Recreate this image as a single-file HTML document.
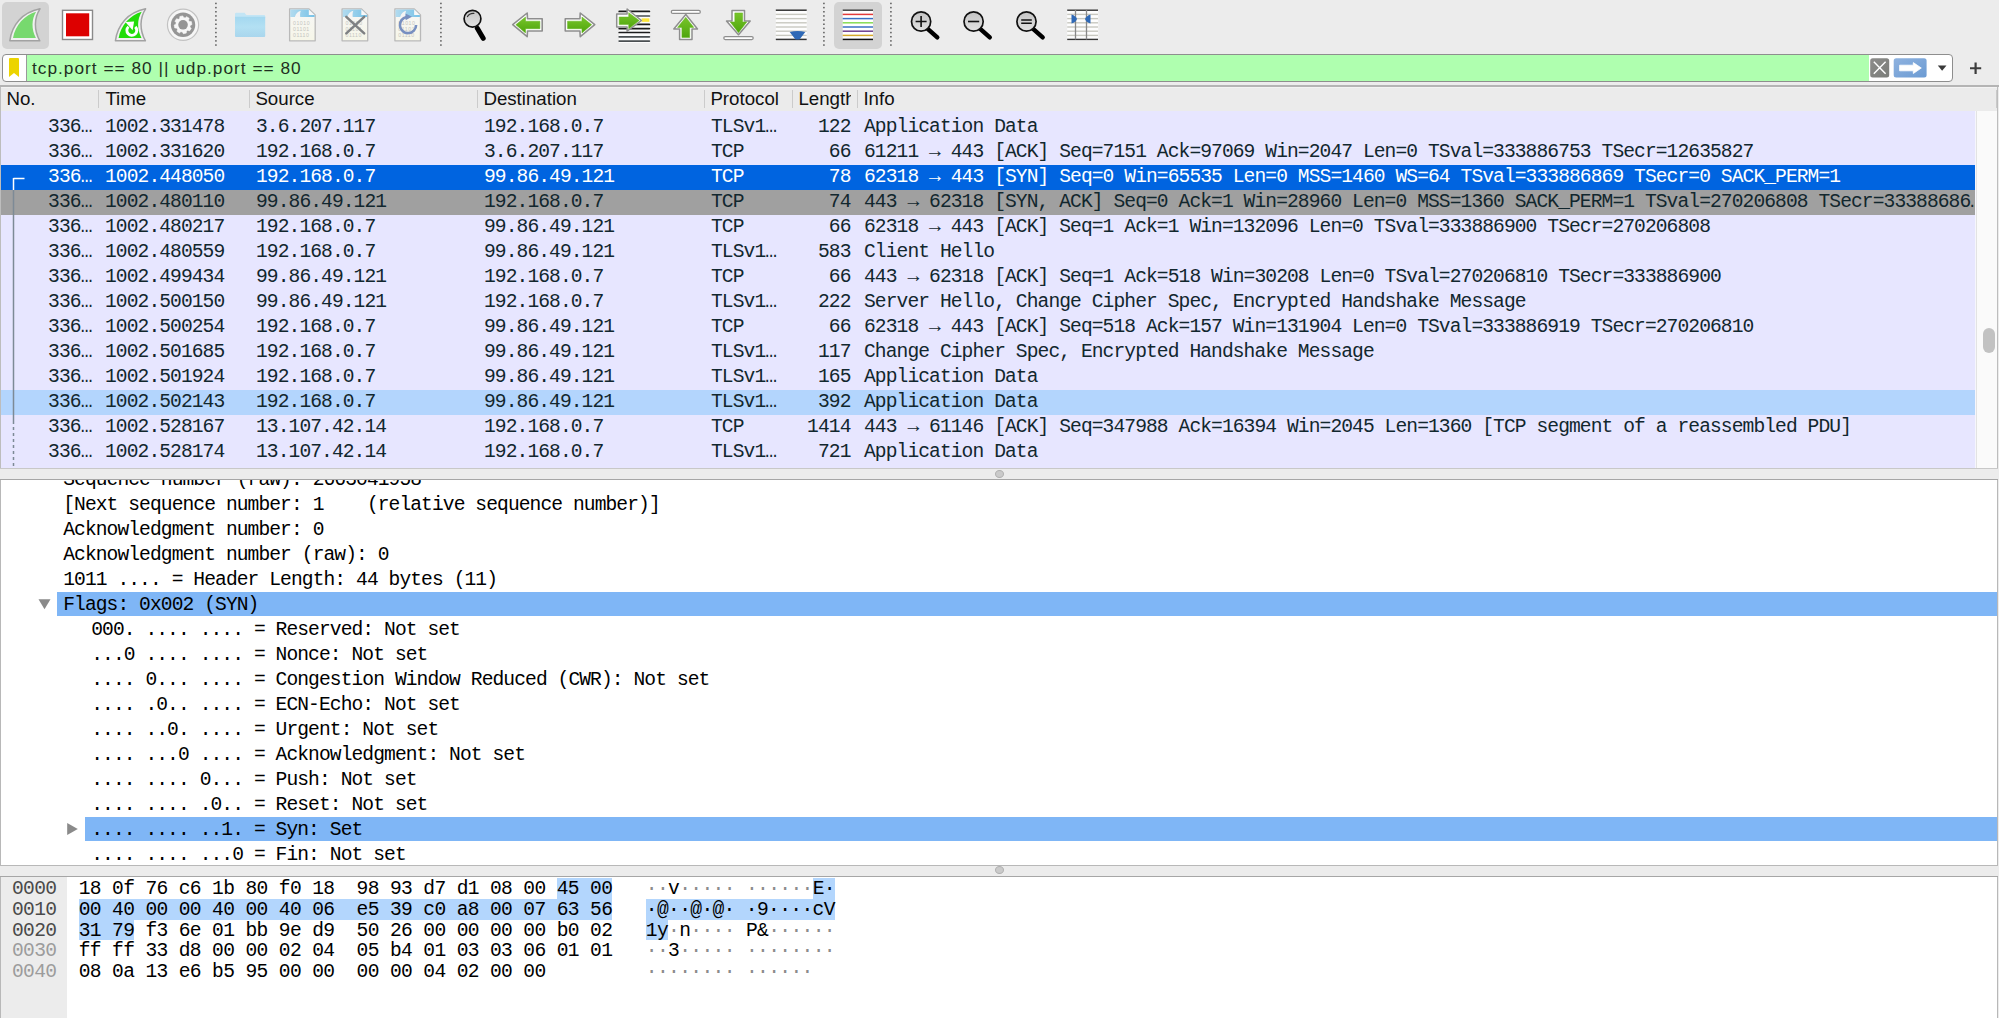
<!DOCTYPE html>
<html><head><meta charset="utf-8"><title>Wireshark</title><style>
*{margin:0;padding:0;box-sizing:border-box}
html,body{width:1999px;height:1018px;overflow:hidden;background:#ececec;position:relative}
.a{position:absolute}
.m{font-family:"Liberation Mono", monospace;font-size:19.6px;letter-spacing:-0.912px;white-space:pre;line-height:25px}
.s{font-family:"Liberation Sans", sans-serif;white-space:pre}
svg{position:absolute;overflow:visible}
</style></head>
<body>
<div class="a" style="left:2px;top:2px;width:47px;height:47px;background:#d3d3d3;border-radius:5px"></div>
<div class="a" style="left:834px;top:2px;width:48px;height:47px;background:#d3d3d3;border-radius:5px"></div>
<svg style="left:0;top:0" width="218" height="50"><rect x="215" y="2.70" width="1.8" height="1.5" fill="#707070"/><rect x="215" y="6.86" width="1.8" height="1.5" fill="#707070"/><rect x="215" y="11.02" width="1.8" height="1.5" fill="#707070"/><rect x="215" y="15.18" width="1.8" height="1.5" fill="#707070"/><rect x="215" y="19.34" width="1.8" height="1.5" fill="#707070"/><rect x="215" y="23.50" width="1.8" height="1.5" fill="#707070"/><rect x="215" y="27.66" width="1.8" height="1.5" fill="#707070"/><rect x="215" y="31.82" width="1.8" height="1.5" fill="#707070"/><rect x="215" y="35.98" width="1.8" height="1.5" fill="#707070"/><rect x="215" y="40.14" width="1.8" height="1.5" fill="#707070"/><rect x="215" y="44.30" width="1.8" height="1.5" fill="#707070"/></svg>
<svg style="left:0;top:0" width="443" height="50"><rect x="440" y="2.70" width="1.8" height="1.5" fill="#707070"/><rect x="440" y="6.86" width="1.8" height="1.5" fill="#707070"/><rect x="440" y="11.02" width="1.8" height="1.5" fill="#707070"/><rect x="440" y="15.18" width="1.8" height="1.5" fill="#707070"/><rect x="440" y="19.34" width="1.8" height="1.5" fill="#707070"/><rect x="440" y="23.50" width="1.8" height="1.5" fill="#707070"/><rect x="440" y="27.66" width="1.8" height="1.5" fill="#707070"/><rect x="440" y="31.82" width="1.8" height="1.5" fill="#707070"/><rect x="440" y="35.98" width="1.8" height="1.5" fill="#707070"/><rect x="440" y="40.14" width="1.8" height="1.5" fill="#707070"/><rect x="440" y="44.30" width="1.8" height="1.5" fill="#707070"/></svg>
<svg style="left:0;top:0" width="826" height="50"><rect x="823" y="2.70" width="1.8" height="1.5" fill="#707070"/><rect x="823" y="6.86" width="1.8" height="1.5" fill="#707070"/><rect x="823" y="11.02" width="1.8" height="1.5" fill="#707070"/><rect x="823" y="15.18" width="1.8" height="1.5" fill="#707070"/><rect x="823" y="19.34" width="1.8" height="1.5" fill="#707070"/><rect x="823" y="23.50" width="1.8" height="1.5" fill="#707070"/><rect x="823" y="27.66" width="1.8" height="1.5" fill="#707070"/><rect x="823" y="31.82" width="1.8" height="1.5" fill="#707070"/><rect x="823" y="35.98" width="1.8" height="1.5" fill="#707070"/><rect x="823" y="40.14" width="1.8" height="1.5" fill="#707070"/><rect x="823" y="44.30" width="1.8" height="1.5" fill="#707070"/></svg>
<svg style="left:0;top:0" width="893" height="50"><rect x="890" y="2.70" width="1.8" height="1.5" fill="#707070"/><rect x="890" y="6.86" width="1.8" height="1.5" fill="#707070"/><rect x="890" y="11.02" width="1.8" height="1.5" fill="#707070"/><rect x="890" y="15.18" width="1.8" height="1.5" fill="#707070"/><rect x="890" y="19.34" width="1.8" height="1.5" fill="#707070"/><rect x="890" y="23.50" width="1.8" height="1.5" fill="#707070"/><rect x="890" y="27.66" width="1.8" height="1.5" fill="#707070"/><rect x="890" y="31.82" width="1.8" height="1.5" fill="#707070"/><rect x="890" y="35.98" width="1.8" height="1.5" fill="#707070"/><rect x="890" y="40.14" width="1.8" height="1.5" fill="#707070"/><rect x="890" y="44.30" width="1.8" height="1.5" fill="#707070"/></svg>
<svg style="left:0;top:0" width="60" height="52"><g transform="translate(0 0)">
<path d="M9.8 40.8 C12 25 22 12.5 40 8.8 C34 18 33.8 30 39.8 40.8 Z" fill="#f1f1f1" stroke="#a2a2a2" stroke-width="1.5" stroke-linejoin="round"/>
<path d="M13 38 C15.2 25.5 24.5 15 36.1 11.8 C31.5 19.5 31.3 29 35.9 38 Z" fill="#77d96e"/></g>
</svg>
<svg style="left:0;top:0" width="100" height="52">
<rect x="62.5" y="10.3" width="30" height="29.2" fill="#fff" stroke="#8a8a8a" stroke-width="1.4"/>
<rect x="66" y="13.3" width="23.2" height="23" fill="#dd0000"/>
</svg>
<svg style="left:0;top:0" width="165.6" height="52"><g transform="translate(105.6 0)">
<path d="M9.8 40.8 C12 25 22 12.5 40 8.8 C34 18 33.8 30 39.8 40.8 Z" fill="#f1f1f1" stroke="#a2a2a2" stroke-width="1.5" stroke-linejoin="round"/>
<path d="M13 38 C15.2 25.5 24.5 15 36.1 11.8 C31.5 19.5 31.3 29 35.9 38 Z" fill="#22dd0a"/><path d="M29.70 26.90 A4.95 4.95 0 1 1 22.89 26.72" fill="none" stroke="#fff" stroke-width="2.9"/><path d="M19.8 22 L28.5 21.4 L27 30.2 Z" fill="#fff"/></g>
</svg>
<svg style="left:0;top:0" width="220" height="52">
<circle cx="183.05" cy="24.8" r="15.6" fill="#f6f6f6" stroke="#c2c2c2" stroke-width="1.2"/>
<circle cx="183.05" cy="24.8" r="12.2" fill="#959595"/>
<polygon points="189.44,21.48 191.35,21.58 191.95,24.53 190.23,25.38 189.92,26.96 191.19,28.39 189.53,30.90 187.72,30.28 186.37,31.19 186.27,33.10 183.32,33.70 182.47,31.98 180.89,31.67 179.46,32.94 176.95,31.28 177.57,29.47 176.66,28.12 174.75,28.02 174.15,25.07 175.87,24.22 176.18,22.64 174.91,21.21 176.57,18.70 178.38,19.32 179.73,18.41 179.83,16.50 182.78,15.90 183.63,17.62 185.21,17.93 186.64,16.66 189.15,18.32 188.53,20.13" fill="#f7f7f7" stroke="#f7f7f7" stroke-width="0.6" stroke-linejoin="round"/>
<circle cx="183.05" cy="24.8" r="4.8" fill="#959595"/>
</svg>
<svg style="left:0;top:0" width="280" height="52">
<defs><linearGradient id="fg" x1="0" y1="0" x2="0" y2="1"><stop offset="0" stop-color="#a4d8f0"/><stop offset="0.5" stop-color="#b3e0f3"/><stop offset="1" stop-color="#a9d6ed"/></linearGradient></defs>
<path d="M235 14 Q235 12.8 236.2 12.8 L244.5 12.8 L246.3 15 L264 15 Q265.2 15 265.2 16.2 L265.2 18 L235 18 Z" fill="#c3e5f5"/>
<path d="M235 16.8 L265.2 16.8 L265.2 36 Q265.2 37 264.2 37 L236 37 Q235 37 235 36 Z" fill="url(#fg)"/>
</svg>
<svg style="left:0;top:0" width="329" height="52">
<defs><linearGradient id="dg289" x1="0" y1="0" x2="1" y2="0"><stop offset="0" stop-color="#b2dbef"/><stop offset="1" stop-color="#78c2e7"/></linearGradient>
<linearGradient id="dp289" x1="0" y1="0" x2="0" y2="1"><stop offset="0" stop-color="#f7f7f7"/><stop offset="1" stop-color="#f6f6e8"/></linearGradient></defs>
<path d="M289.60 8.9 L309.00 8.9 L315.20 15 L315.20 40.8 L289.60 40.8 Z" fill="url(#dp289)" stroke="#b9b9b9" stroke-width="1.3" stroke-linejoin="round"/>
<path d="M290.20 9.5 L308.80 9.5 L314.60 15.2 L314.60 17 L290.20 17 Z" fill="url(#dg289)"/>
<path d="M294.80 17 C296.00 13.5 298.00 11.5 300.80 10.8 C300.00 13 300.00 15 300.20 17 Z" fill="#f4f4f4"/>
<path d="M308.80 9.5 L308.80 15 L314.60 15 Z" fill="#f8f8f8"/>
<text x="293.00" y="24.9" font-family="Liberation Sans" font-size="5.2" fill="#c4c4c0" letter-spacing="0.55">01010</text>
<text x="293.00" y="31.1" font-family="Liberation Sans" font-size="5.2" fill="#c4c4c0" letter-spacing="0.55">01101</text>
<text x="293.00" y="37.3" font-family="Liberation Sans" font-size="5.2" fill="#c4c4c0" letter-spacing="0.55">01110</text>

</svg>
<svg style="left:0;top:0" width="381.5" height="52">
<defs><linearGradient id="dg341" x1="0" y1="0" x2="1" y2="0"><stop offset="0" stop-color="#b2dbef"/><stop offset="1" stop-color="#78c2e7"/></linearGradient>
<linearGradient id="dp341" x1="0" y1="0" x2="0" y2="1"><stop offset="0" stop-color="#f7f7f7"/><stop offset="1" stop-color="#f6f6e8"/></linearGradient></defs>
<path d="M342.10 8.9 L361.50 8.9 L367.70 15 L367.70 40.8 L342.10 40.8 Z" fill="url(#dp341)" stroke="#b9b9b9" stroke-width="1.3" stroke-linejoin="round"/>
<path d="M342.70 9.5 L361.30 9.5 L367.10 15.2 L367.10 17 L342.70 17 Z" fill="url(#dg341)"/>
<path d="M347.30 17 C348.50 13.5 350.50 11.5 353.30 10.8 C352.50 13 352.50 15 352.70 17 Z" fill="#f4f4f4"/>
<path d="M361.30 9.5 L361.30 15 L367.10 15 Z" fill="#f8f8f8"/>
<text x="345.50" y="24.9" font-family="Liberation Sans" font-size="5.2" fill="#c4c4c0" letter-spacing="0.55">01010</text>
<text x="345.50" y="31.1" font-family="Liberation Sans" font-size="5.2" fill="#c4c4c0" letter-spacing="0.55">01101</text>
<text x="345.50" y="37.3" font-family="Liberation Sans" font-size="5.2" fill="#c4c4c0" letter-spacing="0.55">01110</text>
<path d="M346.3 16.8 L364.2 33.4 M364.2 16.8 L346.3 33.4" stroke="#7f8183" stroke-width="2.5" stroke-linecap="round"/>
</svg>
<svg style="left:0;top:0" width="434.3" height="52">
<defs><linearGradient id="dg394" x1="0" y1="0" x2="1" y2="0"><stop offset="0" stop-color="#b2dbef"/><stop offset="1" stop-color="#78c2e7"/></linearGradient>
<linearGradient id="dp394" x1="0" y1="0" x2="0" y2="1"><stop offset="0" stop-color="#f7f7f7"/><stop offset="1" stop-color="#f6f6e8"/></linearGradient></defs>
<path d="M394.90 8.9 L414.30 8.9 L420.50 15 L420.50 40.8 L394.90 40.8 Z" fill="url(#dp394)" stroke="#b9b9b9" stroke-width="1.3" stroke-linejoin="round"/>
<path d="M395.50 9.5 L414.10 9.5 L419.90 15.2 L419.90 17 L395.50 17 Z" fill="url(#dg394)"/>
<path d="M400.10 17 C401.30 13.5 403.30 11.5 406.10 10.8 C405.30 13 405.30 15 405.50 17 Z" fill="#f4f4f4"/>
<path d="M414.10 9.5 L414.10 15 L419.90 15 Z" fill="#f8f8f8"/>
<text x="398.30" y="24.9" font-family="Liberation Sans" font-size="5.2" fill="#c4c4c0" letter-spacing="0.55">01010</text>
<text x="398.30" y="31.1" font-family="Liberation Sans" font-size="5.2" fill="#c4c4c0" letter-spacing="0.55">01101</text>
<text x="398.30" y="37.3" font-family="Liberation Sans" font-size="5.2" fill="#c4c4c0" letter-spacing="0.55">01110</text>
<path d="M416.1 25 A8.1 8.1 0 1 1 406.6 17.0" fill="none" stroke="#7890c0" stroke-width="2.6"/><path d="M405.6 13.6 L412 16.7 L405.6 20.2 Z" fill="#7890c0"/>
</svg>
<svg style="left:0;top:0" width="500" height="52"><defs><linearGradient id="mg472" x1="0" y1="0" x2="0" y2="1"><stop offset="0" stop-color="#c4c4c4"/><stop offset="1" stop-color="#e2e2e2"/></linearGradient></defs>
<path d="M477.3 28.3 L483.2 38.3" stroke="#000" stroke-width="5.0" stroke-linecap="round"/>
<circle cx="472.5" cy="18.7" r="8.4" fill="url(#mg472)" stroke="#111" stroke-width="1.7"/><path d="M467.4 16.6 Q469.5 13 473.9 13.4" fill="none" stroke="#333" stroke-width="1.1" stroke-linecap="round"/></svg>
<svg style="left:0;top:0" width="620" height="52"><defs><linearGradient id="ag" x1="0" y1="0" x2="0" y2="1"><stop offset="0" stop-color="#78c52a"/><stop offset="1" stop-color="#4ea50c"/></linearGradient></defs>
<path d="M512.7 24.7 L527.2 13 L527.5 18.7 L542.2 18.7 L542.2 31 L527.5 31 L527.2 36.7 Z" fill="#fff" stroke="#8e8e8e" stroke-width="1.6" stroke-linejoin="round"/>
<path d="M515.8 24.7 L525.5 17 L525.5 21.2 L539.9 21.2 L539.9 28.7 L525.5 28.7 L525.5 32.9 Z" fill="url(#ag)" stroke="#62b41c" stroke-width="0.5" stroke-linejoin="round"/><g transform="translate(1107.45 0) scale(-1 1)"><defs><linearGradient id="ag" x1="0" y1="0" x2="0" y2="1"><stop offset="0" stop-color="#78c52a"/><stop offset="1" stop-color="#4ea50c"/></linearGradient></defs>
<path d="M512.7 24.7 L527.2 13 L527.5 18.7 L542.2 18.7 L542.2 31 L527.5 31 L527.2 36.7 Z" fill="#fff" stroke="#8e8e8e" stroke-width="1.6" stroke-linejoin="round"/>
<path d="M515.8 24.7 L525.5 17 L525.5 21.2 L539.9 21.2 L539.9 28.7 L525.5 28.7 L525.5 32.9 Z" fill="url(#ag)" stroke="#62b41c" stroke-width="0.5" stroke-linejoin="round"/></g></svg>
<svg style="left:0;top:0" width="660" height="52">
<rect x="619" y="9.5" width="31" height="33.5" fill="#fbfbfb"/><path d="M619.2 11.4 L649.4 11.4" stroke="#1c1c1c" stroke-width="1.7" stroke-linecap="round"/><path d="M619.2 16 L649.4 16" stroke="#4a4f52" stroke-width="1.7" stroke-linecap="round"/><path d="M641.7 20.1 L649.4 20.1" stroke="#fde53a" stroke-width="3.5"/><path d="M619.2 24.4 L649.4 24.4" stroke="#1c1c1c" stroke-width="1.7" stroke-linecap="round"/><path d="M619.2 28.6 L649.4 28.6" stroke="#1c1c1c" stroke-width="1.7" stroke-linecap="round"/><path d="M619.2 32.5 L649.4 32.5" stroke="#1c1c1c" stroke-width="1.7" stroke-linecap="round"/><path d="M619.2 36.8 L649.4 36.8" stroke="#4a4f52" stroke-width="1.7" stroke-linecap="round"/><path d="M619.2 41.1 L649.4 41.1" stroke="#4a4f52" stroke-width="1.7" stroke-linecap="round"/>
<path d="M616.7 14.1 L627.1 14.1 L627.1 9 L641.5 20.5 L627.1 31.2 L627.1 26.9 L616.7 26.9 Z" fill="#fff" stroke="#8e8e8e" stroke-width="1.5" stroke-linejoin="round"/>
<path d="M619.2 17 L628.7 17 L628.7 12.7 L639.2 20.5 L628.7 28.8 L628.7 24.6 L619.2 24.6 Z" fill="url(#ag)" stroke="#62b41c" stroke-width="0.5" stroke-linejoin="round"/>
</svg>
<svg style="left:0;top:0" width="760" height="52">
<rect x="671.3" y="10.4" width="29" height="3" rx="1.5" fill="#fff" stroke="#8e8e8e" stroke-width="1.3"/>
<path d="M685.8 14.5 L697.5 29 L692 29 L692 39.4 L679.6 39.4 L679.6 29 L673.8 29 Z" fill="#fff" stroke="#8e8e8e" stroke-width="1.5" stroke-linejoin="round"/>
<path d="M685.8 17.3 L693.8 27.4 L689.7 27.4 L689.7 37.5 L681.9 37.5 L681.9 27.4 L677.5 27.4 Z" fill="url(#ag)" stroke="#62b41c" stroke-width="0.5" stroke-linejoin="round"/>
</svg>
<svg style="left:0;top:0" width="800" height="52">
<rect x="723.8" y="36.6" width="29.4" height="3" rx="1.5" fill="#fff" stroke="#8e8e8e" stroke-width="1.3"/>
<path d="M732 10.4 L744.5 10.4 L744.5 21 L750.2 21 L738.5 34.8 L726.5 21 L732 21 Z" fill="#fff" stroke="#8e8e8e" stroke-width="1.5" stroke-linejoin="round"/>
<path d="M734.8 12.9 L742.6 12.9 L742.6 21.9 L746.8 21.9 L738.5 32.7 L730.2 21.9 L734.8 21.9 Z" fill="url(#ag)" stroke="#62b41c" stroke-width="0.5" stroke-linejoin="round"/>
</svg>
<svg style="left:0;top:0" width="820" height="52">
<rect x="775.8" y="10" width="31" height="30" fill="#fdfdfd"/><path d="M775.8 10.2 L806.7 10.2" stroke="#333" stroke-width="1.5"/><path d="M775.8 14.4 L806.7 14.4" stroke="#c8c8c0" stroke-width="1.4"/><path d="M775.8 18.6 L806.7 18.6" stroke="#c8c8c0" stroke-width="1.4"/><path d="M775.8 22.8 L806.7 22.8" stroke="#c8c8c0" stroke-width="1.4"/><path d="M775.8 27 L806.7 27" stroke="#c8c8c0" stroke-width="1.4"/><path d="M775.8 31.2 L806.7 31.2" stroke="#c8c8c0" stroke-width="1.4"/><path d="M775.8 35.4 L806.7 35.4" stroke="#c8c8c0" stroke-width="1.4"/><path d="M775.8 39.4 L806.7 39.4" stroke="#333" stroke-width="1.5"/>
<path d="M789.7 32 Q797.5 30 805.3 32 L799.5 39.6 L795.5 39.6 Z" fill="#2f69b6"/>
</svg>
<svg style="left:0;top:0" width="900" height="52">
<rect x="842.7" y="10" width="30.3" height="30" fill="#fff"/><path d="M842.7 10.2 L873 10.2" stroke="#444" stroke-width="1.5"/><path d="M842.7 14.4 L873 14.4" stroke="#e33b3b" stroke-width="1.5"/><path d="M842.7 18.6 L873 18.6" stroke="#3a6fc4" stroke-width="1.5"/><path d="M842.7 22.8 L873 22.8" stroke="#86dc55" stroke-width="1.5"/><path d="M842.7 27 L873 27" stroke="#3a6fc4" stroke-width="1.5"/><path d="M842.7 31.2 L873 31.2" stroke="#6e3f8e" stroke-width="1.5"/><path d="M842.7 35.4 L873 35.4" stroke="#d6a92a" stroke-width="1.5"/><path d="M842.7 39.4 L873 39.4" stroke="#111" stroke-width="1.5"/>
</svg>
<svg style="left:0;top:0" width="1060" height="52"><defs><linearGradient id="mg921" x1="0" y1="0" x2="0" y2="1"><stop offset="0" stop-color="#c4c4c4"/><stop offset="1" stop-color="#e2e2e2"/></linearGradient></defs>
<path d="M927.4 28.6 L937.3 37.4" stroke="#000" stroke-width="4.4" stroke-linecap="round"/>
<circle cx="921.1" cy="21.5" r="9.6" fill="url(#mg921)" stroke="#111" stroke-width="1.7"/><path d="M921.1 16 L921.1 27 M915.6 21.5 L926.6 21.5" stroke="#111" stroke-width="1.6"/><defs><linearGradient id="mg973" x1="0" y1="0" x2="0" y2="1"><stop offset="0" stop-color="#c4c4c4"/><stop offset="1" stop-color="#e2e2e2"/></linearGradient></defs>
<path d="M979.9 28.6 L989.8 37.4" stroke="#000" stroke-width="4.4" stroke-linecap="round"/>
<circle cx="973.6" cy="21.5" r="9.6" fill="url(#mg973)" stroke="#111" stroke-width="1.7"/><path d="M968 21.5 L979.2 21.5" stroke="#111" stroke-width="1.6"/><defs><linearGradient id="mg1026" x1="0" y1="0" x2="0" y2="1"><stop offset="0" stop-color="#c4c4c4"/><stop offset="1" stop-color="#e2e2e2"/></linearGradient></defs>
<path d="M1032.8 28.6 L1042.7 37.4" stroke="#000" stroke-width="4.4" stroke-linecap="round"/>
<circle cx="1026.5" cy="21.5" r="9.6" fill="url(#mg1026)" stroke="#111" stroke-width="1.7"/><path d="M1021.2 20 L1031.8 20 M1021.2 23.2 L1031.8 23.2" stroke="#111" stroke-width="1.4"/></svg>
<svg style="left:0;top:0" width="1110" height="52">
<rect x="1067.2" y="10" width="31" height="30" fill="#fdfdfd"/><path d="M1067.2 10.2 L1098 10.2" stroke="#333" stroke-width="1.4"/><path d="M1067.2 14.4 L1098 14.4" stroke="#c8c8c0" stroke-width="1.4"/><path d="M1067.2 18.6 L1098 18.6" stroke="#c8c8c0" stroke-width="1.4"/><path d="M1067.2 22.8 L1098 22.8" stroke="#c8c8c0" stroke-width="1.4"/><path d="M1067.2 27 L1098 27" stroke="#c8c8c0" stroke-width="1.4"/><path d="M1067.2 31.2 L1098 31.2" stroke="#c8c8c0" stroke-width="1.4"/><path d="M1067.2 35.4 L1098 35.4" stroke="#c8c8c0" stroke-width="1.4"/><path d="M1067.2 39.4 L1098 39.4" stroke="#333" stroke-width="1.4"/>
<path d="M1075.5 10 L1075.5 39.6 M1086.5 10 L1086.5 39.6" stroke="#888" stroke-width="1.3"/>
<path d="M1071.5 14.5 Q1076 16 1077 19 Q1076 22 1071.5 23.5 Z" fill="#2f69b6"/>
<path d="M1090.5 14.5 Q1086 16 1085 19 Q1086 22 1090.5 23.5 Z" fill="#2f69b6"/>
</svg>
<div class="a" style="left:2px;top:54px;width:1951px;height:28px;border:1px solid #8e8e8e;border-radius:4px;background:#fff;overflow:hidden"><div class="a" style="left:23px;top:0;width:1px;height:26px;background:#9a9a9a"></div><div class="a" style="left:24px;top:0;width:1842px;height:26px;background:#afffaf"></div></div>
<svg style="left:0;top:0" width="30" height="90"><path d="M9 59 Q9 58 10 58 L18 58 Q19 58 19 59 L19 77 L14 73 L9 77 Z" fill="#ecd400"/></svg>
<div class="a s" style="left:32px;top:55px;height:26px;line-height:26px;font-size:17.3px;letter-spacing:1.0px;color:#1f2f1f">tcp.port == 80 || udp.port == 80</div>
<svg style="left:0;top:0" width="1999" height="90"><defs><linearGradient id="xb" x1="0" y1="0" x2="1" y2="1"><stop offset="0" stop-color="#8c8c8a"/><stop offset="1" stop-color="#7b7d79"/></linearGradient><linearGradient id="ab" x1="0" y1="0" x2="1" y2="1"><stop offset="0" stop-color="#8fb2df"/><stop offset="1" stop-color="#6b9bd3"/></linearGradient></defs><rect x="1870.2" y="58.2" width="19" height="19.2" rx="2.5" fill="url(#xb)"/><path d="M1873.8 61.8 L1885.6 73.8 M1885.6 61.8 L1873.8 73.8" stroke="#fff" stroke-width="1.4"/><rect x="1893.7" y="58.2" width="32.9" height="19.2" rx="2.5" fill="url(#ab)"/><path d="M1899.6 65.2 L1913.3 65.2 L1913.3 62.6 L1921.3 68 L1913.3 73.5 L1913.3 70.8 L1899.6 70.8 Z" fill="#fff" stroke="#fff" stroke-width="0.8" stroke-linejoin="round"/><path d="M1937.8 65.4 L1946.5 65.4 L1942.15 70.7 Z" fill="#3a3a3a"/><path d="M1975.6 62.4 L1975.6 74.1 M1970 68.25 L1981.2 68.25" stroke="#3c3c3c" stroke-width="2.2"/></svg>
<div class="a" style="left:0;top:85px;width:1999px;height:2px;background:#b4b4b4"></div>
<div class="a" style="left:0;top:87px;width:1px;height:382px;background:#bdbdbd"></div>
<div class="a" style="left:1997px;top:87px;width:1px;height:382px;background:#bdbdbd"></div>
<div class="a" style="left:1px;top:87px;width:1996px;height:24px;background:#ebebeb;border-top:1px solid #f3f3f3"></div>
<div class="a s" style="left:6.4px;top:87px;height:24px;line-height:24px;font-size:18.7px;color:#111;">No.</div>
<div class="a" style="left:97.75px;top:90px;width:1.5px;height:18px;background:#cbcbcb"></div>
<div class="a s" style="left:105.4px;top:87px;height:24px;line-height:24px;font-size:18.7px;color:#111;">Time</div>
<div class="a" style="left:248.75px;top:90px;width:1.5px;height:18px;background:#cbcbcb"></div>
<div class="a s" style="left:255.4px;top:87px;height:24px;line-height:24px;font-size:18.7px;color:#111;">Source</div>
<div class="a" style="left:476.75px;top:90px;width:1.5px;height:18px;background:#cbcbcb"></div>
<div class="a s" style="left:483.4px;top:87px;height:24px;line-height:24px;font-size:18.7px;color:#111;">Destination</div>
<div class="a" style="left:703.75px;top:90px;width:1.5px;height:18px;background:#cbcbcb"></div>
<div class="a s" style="left:710.4px;top:87px;height:24px;line-height:24px;font-size:18.7px;color:#111;">Protocol</div>
<div class="a" style="left:791.75px;top:90px;width:1.5px;height:18px;background:#cbcbcb"></div>
<div class="a s" style="left:798.4px;top:87px;height:24px;line-height:24px;font-size:18.7px;color:#111;width:53px;overflow:hidden;">Length</div>
<div class="a" style="left:856.75px;top:90px;width:1.5px;height:18px;background:#cbcbcb"></div>
<div class="a s" style="left:863.4px;top:87px;height:24px;line-height:24px;font-size:18.7px;color:#111;">Info</div>
<div class="a" style="left:1996px;top:90px;width:1px;height:18px;background:#c9c9c9"></div>
<div class="a" style="left:1px;top:111px;width:1974px;height:357px;background:#e7e6ff;overflow:hidden">
<div class="a" style="top:4.4px;left:0;width:1974px;height:25px;color:#12272e">
<div class="a m" style="left:47.1px;top:0">336…</div>
<div class="a m" style="left:104px;top:0">1002.331478</div>
<div class="a m" style="left:255px;top:0">3.6.207.117</div>
<div class="a m" style="left:483px;top:0">192.168.0.7</div>
<div class="a m" style="left:710px;top:0">TLSv1…</div>
<div class="a m" style="left:817.0px;top:0">122</div>
<div class="a m" style="left:863px;top:0">Application Data</div>
</div>
<div class="a" style="top:29.4px;left:0;width:1974px;height:25px;color:#12272e">
<div class="a m" style="left:47.1px;top:0">336…</div>
<div class="a m" style="left:104px;top:0">1002.331620</div>
<div class="a m" style="left:255px;top:0">192.168.0.7</div>
<div class="a m" style="left:483px;top:0">3.6.207.117</div>
<div class="a m" style="left:710px;top:0">TCP</div>
<div class="a m" style="left:827.8px;top:0">66</div>
<div class="a m" style="left:863px;top:0">61211 → 443 [ACK] Seq=7151 Ack=97069 Win=2047 Len=0 TSval=333886753 TSecr=12635827</div>
</div>
<div class="a" style="top:54.4px;left:0;width:1974px;height:25px;background:#0064e0;color:#ffffff">
<div class="a m" style="left:47.1px;top:0">336…</div>
<div class="a m" style="left:104px;top:0">1002.448050</div>
<div class="a m" style="left:255px;top:0">192.168.0.7</div>
<div class="a m" style="left:483px;top:0">99.86.49.121</div>
<div class="a m" style="left:710px;top:0">TCP</div>
<div class="a m" style="left:827.8px;top:0">78</div>
<div class="a m" style="left:863px;top:0">62318 → 443 [SYN] Seq=0 Win=65535 Len=0 MSS=1460 WS=64 TSval=333886869 TSecr=0 SACK_PERM=1</div>
</div>
<div class="a" style="top:79.4px;left:0;width:1974px;height:25px;background:#a0a0a0;color:#12272e">
<div class="a m" style="left:47.1px;top:0">336…</div>
<div class="a m" style="left:104px;top:0">1002.480110</div>
<div class="a m" style="left:255px;top:0">99.86.49.121</div>
<div class="a m" style="left:483px;top:0">192.168.0.7</div>
<div class="a m" style="left:710px;top:0">TCP</div>
<div class="a m" style="left:827.8px;top:0">74</div>
<div class="a m" style="left:863px;top:0">443 → 62318 [SYN, ACK] Seq=0 Ack=1 Win=28960 Len=0 MSS=1360 SACK_PERM=1 TSval=270206808 TSecr=33388686…</div>
</div>
<div class="a" style="top:104.4px;left:0;width:1974px;height:25px;color:#12272e">
<div class="a m" style="left:47.1px;top:0">336…</div>
<div class="a m" style="left:104px;top:0">1002.480217</div>
<div class="a m" style="left:255px;top:0">192.168.0.7</div>
<div class="a m" style="left:483px;top:0">99.86.49.121</div>
<div class="a m" style="left:710px;top:0">TCP</div>
<div class="a m" style="left:827.8px;top:0">66</div>
<div class="a m" style="left:863px;top:0">62318 → 443 [ACK] Seq=1 Ack=1 Win=132096 Len=0 TSval=333886900 TSecr=270206808</div>
</div>
<div class="a" style="top:129.4px;left:0;width:1974px;height:25px;color:#12272e">
<div class="a m" style="left:47.1px;top:0">336…</div>
<div class="a m" style="left:104px;top:0">1002.480559</div>
<div class="a m" style="left:255px;top:0">192.168.0.7</div>
<div class="a m" style="left:483px;top:0">99.86.49.121</div>
<div class="a m" style="left:710px;top:0">TLSv1…</div>
<div class="a m" style="left:817.0px;top:0">583</div>
<div class="a m" style="left:863px;top:0">Client Hello</div>
</div>
<div class="a" style="top:154.4px;left:0;width:1974px;height:25px;color:#12272e">
<div class="a m" style="left:47.1px;top:0">336…</div>
<div class="a m" style="left:104px;top:0">1002.499434</div>
<div class="a m" style="left:255px;top:0">99.86.49.121</div>
<div class="a m" style="left:483px;top:0">192.168.0.7</div>
<div class="a m" style="left:710px;top:0">TCP</div>
<div class="a m" style="left:827.8px;top:0">66</div>
<div class="a m" style="left:863px;top:0">443 → 62318 [ACK] Seq=1 Ack=518 Win=30208 Len=0 TSval=270206810 TSecr=333886900</div>
</div>
<div class="a" style="top:179.4px;left:0;width:1974px;height:25px;color:#12272e">
<div class="a m" style="left:47.1px;top:0">336…</div>
<div class="a m" style="left:104px;top:0">1002.500150</div>
<div class="a m" style="left:255px;top:0">99.86.49.121</div>
<div class="a m" style="left:483px;top:0">192.168.0.7</div>
<div class="a m" style="left:710px;top:0">TLSv1…</div>
<div class="a m" style="left:817.0px;top:0">222</div>
<div class="a m" style="left:863px;top:0">Server Hello, Change Cipher Spec, Encrypted Handshake Message</div>
</div>
<div class="a" style="top:204.4px;left:0;width:1974px;height:25px;color:#12272e">
<div class="a m" style="left:47.1px;top:0">336…</div>
<div class="a m" style="left:104px;top:0">1002.500254</div>
<div class="a m" style="left:255px;top:0">192.168.0.7</div>
<div class="a m" style="left:483px;top:0">99.86.49.121</div>
<div class="a m" style="left:710px;top:0">TCP</div>
<div class="a m" style="left:827.8px;top:0">66</div>
<div class="a m" style="left:863px;top:0">62318 → 443 [ACK] Seq=518 Ack=157 Win=131904 Len=0 TSval=333886919 TSecr=270206810</div>
</div>
<div class="a" style="top:229.4px;left:0;width:1974px;height:25px;color:#12272e">
<div class="a m" style="left:47.1px;top:0">336…</div>
<div class="a m" style="left:104px;top:0">1002.501685</div>
<div class="a m" style="left:255px;top:0">192.168.0.7</div>
<div class="a m" style="left:483px;top:0">99.86.49.121</div>
<div class="a m" style="left:710px;top:0">TLSv1…</div>
<div class="a m" style="left:817.0px;top:0">117</div>
<div class="a m" style="left:863px;top:0">Change Cipher Spec, Encrypted Handshake Message</div>
</div>
<div class="a" style="top:254.4px;left:0;width:1974px;height:25px;color:#12272e">
<div class="a m" style="left:47.1px;top:0">336…</div>
<div class="a m" style="left:104px;top:0">1002.501924</div>
<div class="a m" style="left:255px;top:0">192.168.0.7</div>
<div class="a m" style="left:483px;top:0">99.86.49.121</div>
<div class="a m" style="left:710px;top:0">TLSv1…</div>
<div class="a m" style="left:817.0px;top:0">165</div>
<div class="a m" style="left:863px;top:0">Application Data</div>
</div>
<div class="a" style="top:279.4px;left:0;width:1974px;height:25px;background:#b3d5fd;color:#12272e">
<div class="a m" style="left:47.1px;top:0">336…</div>
<div class="a m" style="left:104px;top:0">1002.502143</div>
<div class="a m" style="left:255px;top:0">192.168.0.7</div>
<div class="a m" style="left:483px;top:0">99.86.49.121</div>
<div class="a m" style="left:710px;top:0">TLSv1…</div>
<div class="a m" style="left:817.0px;top:0">392</div>
<div class="a m" style="left:863px;top:0">Application Data</div>
</div>
<div class="a" style="top:304.4px;left:0;width:1974px;height:25px;color:#12272e">
<div class="a m" style="left:47.1px;top:0">336…</div>
<div class="a m" style="left:104px;top:0">1002.528167</div>
<div class="a m" style="left:255px;top:0">13.107.42.14</div>
<div class="a m" style="left:483px;top:0">192.168.0.7</div>
<div class="a m" style="left:710px;top:0">TCP</div>
<div class="a m" style="left:806.1px;top:0">1414</div>
<div class="a m" style="left:863px;top:0">443 → 61146 [ACK] Seq=347988 Ack=16394 Win=2045 Len=1360 [TCP segment of a reassembled PDU]</div>
</div>
<div class="a" style="top:329.4px;left:0;width:1974px;height:25px;color:#12272e">
<div class="a m" style="left:47.1px;top:0">336…</div>
<div class="a m" style="left:104px;top:0">1002.528174</div>
<div class="a m" style="left:255px;top:0">13.107.42.14</div>
<div class="a m" style="left:483px;top:0">192.168.0.7</div>
<div class="a m" style="left:710px;top:0">TLSv1…</div>
<div class="a m" style="left:817.0px;top:0">721</div>
<div class="a m" style="left:863px;top:0">Application Data</div>
</div>
<svg style="left:0;top:0" width="30" height="360"><path d="M12.5 67.5 L23.5 67.5 M12.5 67 L12.5 79" stroke="#fff" stroke-width="1.5"/><path d="M12.5 79 L12.5 310" stroke="#7d8a96" stroke-width="1.5"/><path d="M12.5 310 L12.5 358" stroke="#7d8a96" stroke-width="1.5" stroke-dasharray="3 3"/></svg>
</div>
<div class="a" style="left:1975px;top:111px;width:1px;height:357px;background:#f6f6fd"></div>
<div class="a" style="left:1976px;top:111px;width:21px;height:357px;background:#fafafa;border-left:1px solid #e3e3e3"></div>
<div class="a" style="left:1983px;top:328px;width:11.5px;height:25px;background:#c2c2c2;border-radius:6px"></div>
<div class="a" style="left:0;top:468px;width:1998px;height:1px;background:#c8c8c8"></div>
<div class="a" style="left:995px;top:470px;width:9px;height:8px;border-radius:50%;background:#cacaca;border:1px solid #b0b0b0"></div>
<div class="a" style="left:0;top:479px;width:1998px;height:1px;background:#a6a6a6"></div>
<div class="a" style="left:0;top:480px;width:1998px;height:385px;background:#fff;border-left:1px solid #b8b8b8;border-right:1px solid #b8b8b8;overflow:hidden">
<div class="a m" style="left:62.2px;top:-12.5px;color:#000">Sequence number (raw): 2663041958</div>
<div class="a m" style="left:62.2px;top:12.5px;color:#000">[Next sequence number: 1    (relative sequence number)]</div>
<div class="a m" style="left:62.2px;top:37.5px;color:#000">Acknowledgment number: 0</div>
<div class="a m" style="left:62.2px;top:62.5px;color:#000">Acknowledgment number (raw): 0</div>
<div class="a m" style="left:62.2px;top:87.5px;color:#000">1011 .... = Header Length: 44 bytes (11)</div>
<div class="a" style="left:56px;top:111.7px;width:1950px;height:24.4px;background:#7fb6f6"></div>
<svg style="left:0;top:0" width="60" height="400"><path d="M37.5 119.2 L49.5 119.2 L43.5 129.2 Z" fill="#8a8a8a"/></svg>
<div class="a m" style="left:62.2px;top:112.5px;color:#000">Flags: 0x002 (SYN)</div>
<div class="a m" style="left:90.2px;top:137.5px;color:#000">000. .... .... = Reserved: Not set</div>
<div class="a m" style="left:90.2px;top:162.5px;color:#000">...0 .... .... = Nonce: Not set</div>
<div class="a m" style="left:90.2px;top:187.5px;color:#000">.... 0... .... = Congestion Window Reduced (CWR): Not set</div>
<div class="a m" style="left:90.2px;top:212.5px;color:#000">.... .0.. .... = ECN-Echo: Not set</div>
<div class="a m" style="left:90.2px;top:237.5px;color:#000">.... ..0. .... = Urgent: Not set</div>
<div class="a m" style="left:90.2px;top:262.5px;color:#000">.... ...0 .... = Acknowledgment: Not set</div>
<div class="a m" style="left:90.2px;top:287.5px;color:#000">.... .... 0... = Push: Not set</div>
<div class="a m" style="left:90.2px;top:312.5px;color:#000">.... .... .0.. = Reset: Not set</div>
<div class="a" style="left:84px;top:336.7px;width:1950px;height:24.4px;background:#7fb6f6"></div>
<svg style="left:0;top:0" width="90" height="400"><path d="M66.2 343 L76.8 349.1 L66.2 355.1 Z" fill="#8a8a8a"/></svg>
<div class="a m" style="left:90.2px;top:337.5px;color:#000">.... .... ..1. = Syn: Set</div>
<div class="a m" style="left:90.2px;top:362.5px;color:#000">.... .... ...0 = Fin: Not set</div>
</div>
<div class="a" style="left:0;top:865px;width:1998px;height:1px;background:#b8b8b8"></div>
<div class="a" style="left:995px;top:866px;width:9px;height:8px;border-radius:50%;background:#cacaca;border:1px solid #b0b0b0"></div>
<div class="a" style="left:0;top:876px;width:1998px;height:1px;background:#a6a6a6"></div>
<div class="a" style="left:0;top:877px;width:1998px;height:141px;background:#fff;border-left:1px solid #b8b8b8;border-right:1px solid #b8b8b8;overflow:hidden">
<div class="a" style="left:0;top:0;width:66px;height:141px;background:#ececec"></div>
<div class="a" style="left:555.9px;top:1.00px;width:55.6px;height:20.75px;background:#b3d6fd"></div>
<div class="a" style="left:77.7px;top:21.75px;width:533.8px;height:20.75px;background:#b3d6fd"></div>
<div class="a" style="left:77.7px;top:42.50px;width:55.6px;height:20.75px;background:#b3d6fd"></div>
<div class="a" style="left:811.6px;top:1.00px;width:22.2px;height:20.75px;background:#b3d6fd"></div>
<div class="a" style="left:644.8px;top:21.75px;width:189.0px;height:20.75px;background:#b3d6fd"></div>
<div class="a" style="left:644.8px;top:42.50px;width:22.2px;height:20.75px;background:#b3d6fd"></div>
<div class="a m" style="left:11px;top:2.00px;line-height:20.75px;letter-spacing:-0.642px;color:#4a4a4a">0000</div>
<div class="a m" style="left:77.7px;top:2.00px;line-height:20.75px;letter-spacing:-0.642px;color:#000">18 0f 76 c6 1b 80 f0 18  98 93 d7 d1 08 00 45 00</div>
<div class="a m" style="left:644.8px;top:2.00px;line-height:20.75px;letter-spacing:-0.642px;color:#000"><span style="color:#8c8c8c">·</span><span style="color:#8c8c8c">·</span>v<span style="color:#8c8c8c">·</span><span style="color:#8c8c8c">·</span><span style="color:#8c8c8c">·</span><span style="color:#8c8c8c">·</span><span style="color:#8c8c8c">·</span> <span style="color:#8c8c8c">·</span><span style="color:#8c8c8c">·</span><span style="color:#8c8c8c">·</span><span style="color:#8c8c8c">·</span><span style="color:#8c8c8c">·</span><span style="color:#8c8c8c">·</span>E·</div>
<div class="a m" style="left:11px;top:22.75px;line-height:20.75px;letter-spacing:-0.642px;color:#4a4a4a">0010</div>
<div class="a m" style="left:77.7px;top:22.75px;line-height:20.75px;letter-spacing:-0.642px;color:#000">00 40 00 00 40 00 40 06  e5 39 c0 a8 00 07 63 56</div>
<div class="a m" style="left:644.8px;top:22.75px;line-height:20.75px;letter-spacing:-0.642px;color:#000">·@··@·@· ·9····cV</div>
<div class="a m" style="left:11px;top:43.50px;line-height:20.75px;letter-spacing:-0.642px;color:#4a4a4a">0020</div>
<div class="a m" style="left:77.7px;top:43.50px;line-height:20.75px;letter-spacing:-0.642px;color:#000">31 79 f3 6e 01 bb 9e d9  50 26 00 00 00 00 b0 02</div>
<div class="a m" style="left:644.8px;top:43.50px;line-height:20.75px;letter-spacing:-0.642px;color:#000">1y<span style="color:#8c8c8c">·</span>n<span style="color:#8c8c8c">·</span><span style="color:#8c8c8c">·</span><span style="color:#8c8c8c">·</span><span style="color:#8c8c8c">·</span> P&amp;<span style="color:#8c8c8c">·</span><span style="color:#8c8c8c">·</span><span style="color:#8c8c8c">·</span><span style="color:#8c8c8c">·</span><span style="color:#8c8c8c">·</span><span style="color:#8c8c8c">·</span></div>
<div class="a m" style="left:11px;top:64.25px;line-height:20.75px;letter-spacing:-0.642px;color:#9c9c9c">0030</div>
<div class="a m" style="left:77.7px;top:64.25px;line-height:20.75px;letter-spacing:-0.642px;color:#000">ff ff 33 d8 00 00 02 04  05 b4 01 03 03 06 01 01</div>
<div class="a m" style="left:644.8px;top:64.25px;line-height:20.75px;letter-spacing:-0.642px;color:#000"><span style="color:#8c8c8c">·</span><span style="color:#8c8c8c">·</span>3<span style="color:#8c8c8c">·</span><span style="color:#8c8c8c">·</span><span style="color:#8c8c8c">·</span><span style="color:#8c8c8c">·</span><span style="color:#8c8c8c">·</span> <span style="color:#8c8c8c">·</span><span style="color:#8c8c8c">·</span><span style="color:#8c8c8c">·</span><span style="color:#8c8c8c">·</span><span style="color:#8c8c8c">·</span><span style="color:#8c8c8c">·</span><span style="color:#8c8c8c">·</span><span style="color:#8c8c8c">·</span></div>
<div class="a m" style="left:11px;top:85.00px;line-height:20.75px;letter-spacing:-0.642px;color:#9c9c9c">0040</div>
<div class="a m" style="left:77.7px;top:85.00px;line-height:20.75px;letter-spacing:-0.642px;color:#000">08 0a 13 e6 b5 95 00 00  00 00 04 02 00 00</div>
<div class="a m" style="left:644.8px;top:85.00px;line-height:20.75px;letter-spacing:-0.642px;color:#000"><span style="color:#8c8c8c">·</span><span style="color:#8c8c8c">·</span><span style="color:#8c8c8c">·</span><span style="color:#8c8c8c">·</span><span style="color:#8c8c8c">·</span><span style="color:#8c8c8c">·</span><span style="color:#8c8c8c">·</span><span style="color:#8c8c8c">·</span> <span style="color:#8c8c8c">·</span><span style="color:#8c8c8c">·</span><span style="color:#8c8c8c">·</span><span style="color:#8c8c8c">·</span><span style="color:#8c8c8c">·</span><span style="color:#8c8c8c">·</span></div>
</div>
</body></html>
